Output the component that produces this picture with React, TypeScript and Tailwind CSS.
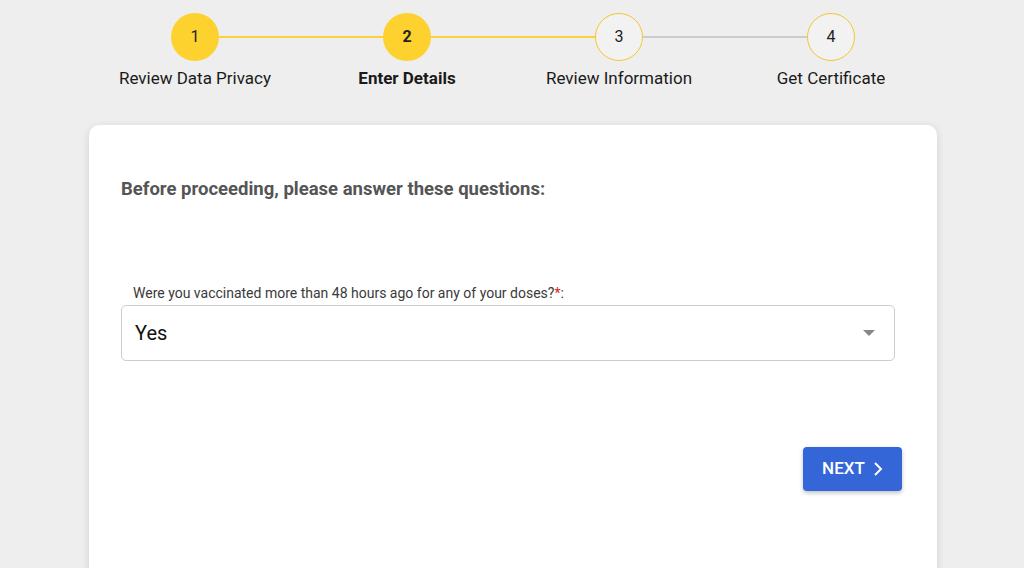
import React from "react";

const steps = [
  { n: 1, label: "Review Data Privacy", state: "done" },
  { n: 2, label: "Enter Details", state: "active" },
  { n: 3, label: "Review Information", state: "todo" },
  { n: 4, label: "Get Certificate", state: "todo" },
];

export default function App() {
  return (
    <div
      className="w-[1024px] h-[568px] overflow-hidden bg-[#eeeeee]"
      style={{ fontFamily: "Roboto, 'Liberation Sans', sans-serif" }}
    >
      <div className="w-[848px] ml-[89px] pt-[13px]">
        <div className="flex">
          {steps.map((s, i) => {
            const leftColor = i === 0 ? "bg-transparent" : i <= 2 ? "bg-[#f9d23c]" : "bg-[#cccccc]";
            const rightColor = i === 3 ? "bg-transparent" : i <= 1 ? "bg-[#f9d23c]" : "bg-[#cccccc]";
            return (
              <div key={s.n} className="w-[212px] flex flex-col items-center">
                <div className="flex items-center w-full">
                  <div className={`flex-1 h-[2px] ${leftColor}`} />
                  <div
                    className={
                      s.state === "todo"
                        ? "w-[48px] h-[48px] rounded-full border border-[#f5c72e] bg-[#f2f2f2] flex items-center justify-center text-[16px] text-[#222]"
                        : `w-[48px] h-[48px] rounded-full bg-[#fdd22e] flex items-center justify-center text-[16px] text-[#222] ${s.state === "active" ? "font-bold" : ""}`
                    }
                  >
                    {s.n}
                  </div>
                  <div className={`flex-1 h-[2px] ${rightColor}`} />
                </div>
                <div
                  className={`mt-[7px] text-[17px] leading-[20px] text-[#1a1a1a] ${s.state === "active" ? "font-bold" : ""}`}
                >
                  {s.label}
                </div>
              </div>
            );
          })}
        </div>

        <div className="mt-[37px] bg-white rounded-[10px] shadow-[0_2px_8px_rgba(0,0,0,0.12)] h-[480px] pl-[32px] pr-[35px] pt-[53px]">
          <div className="text-[18.5px] leading-[22px] font-bold text-[#555555]">
            Before proceeding, please answer these questions:
          </div>
          <div className="mt-[85px] pl-[12px] text-[14px] leading-[16px] text-[#3a3a3a]">
            Were you vaccinated more than 48 hours ago for any of your doses?
            <span className="text-[#e02020]">*</span>:
          </div>
          <div className="mt-[4px] w-[774px] h-[56px] border border-[#cccccc] rounded-[5px] flex items-center justify-between pl-[13px] pr-[19px]">
            <span className="text-[20px] text-[#111]">Yes</span>
            <svg width="12" height="6" viewBox="0 0 12 6">
              <path d="M0 0 L12 0 L6 6 Z" fill="#888888" />
            </svg>
          </div>
          <div className="mt-[86px] flex justify-end">
            <button className="w-[99px] h-[44px] rounded-[4px] bg-[#3466d8] text-white text-[17px] font-medium flex items-center justify-center gap-[8px] shadow-[0_2px_4px_rgba(0,0,0,0.25)]">
              NEXT
              <svg width="10" height="16" viewBox="0 0 10 16">
                <path d="M2 2 L8 8 L2 14" stroke="white" strokeWidth="2" fill="none" />
              </svg>
            </button>
          </div>
        </div>
      </div>
    </div>
  );
}
